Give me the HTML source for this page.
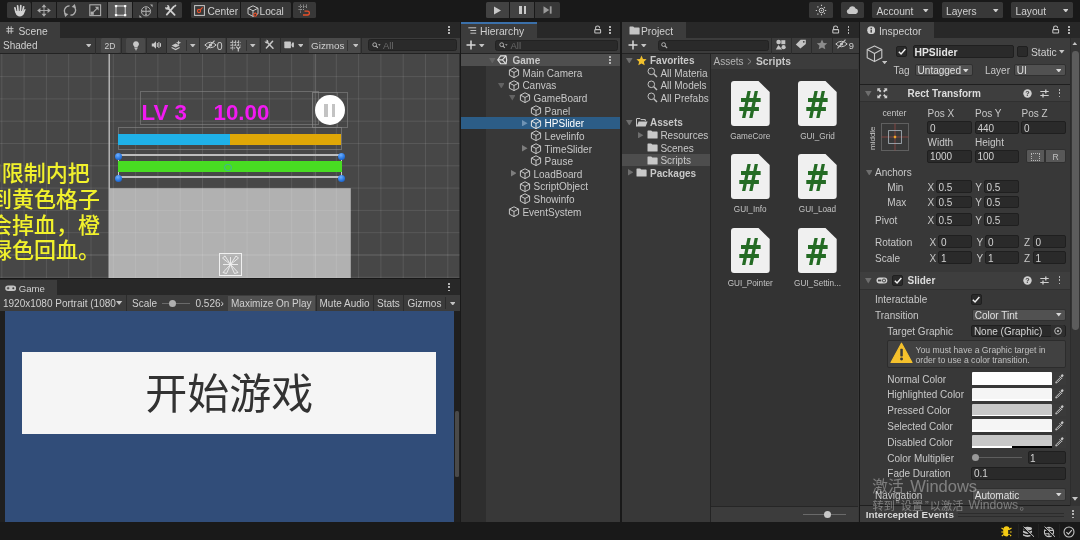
<!DOCTYPE html>
<html><head><meta charset="utf-8"><title>Unity</title>
<style>
html,body{margin:0;padding:0}
body{will-change:transform;width:1080px;height:540px;overflow:hidden;background:#191919;position:relative;font-family:"Liberation Sans","Noto Sans CJK SC",sans-serif;font-size:10px;color:#c8c8c8}
.a{position:absolute;box-sizing:border-box}
.t{white-space:nowrap}
.b{font-weight:bold}
.clip{overflow:hidden}
</style></head><body>
<div class="a" style="left:0px;top:0px;width:1080px;height:22px;background:#191919;"></div>
<div class="a" style="left:7.0px;top:2px;width:24.3px;height:16px;background:#383838;border-radius:1.5px;"></div>
<div class="a" style="left:32.15px;top:2px;width:24.3px;height:16px;background:#383838;"></div>
<div class="a" style="left:57.3px;top:2px;width:24.3px;height:16px;background:#383838;"></div>
<div class="a" style="left:82.44999999999999px;top:2px;width:24.3px;height:16px;background:#383838;"></div>
<div class="a" style="left:107.6px;top:2px;width:24.3px;height:16px;background:#585858;"></div>
<div class="a" style="left:132.75px;top:2px;width:24.3px;height:16px;background:#383838;"></div>
<div class="a" style="left:157.89999999999998px;top:2px;width:24.3px;height:16px;background:#383838;border-radius:1.5px;"></div>
<svg class="a" style="left:12.5px;top:3.6px;" width="13" height="13" viewBox="0 0 13 13"><g fill="#d2d2d2"><rect x="2.1" y="2.8" width="1.7" height="6" rx="0.85" transform="rotate(-14 3 8)"/><rect x="4.3" y="0.9" width="1.7" height="7.2" rx="0.85" transform="rotate(-5 5.1 8)"/><rect x="6.5" y="0.7" width="1.7" height="7.2" rx="0.85" transform="rotate(4 7.3 8)"/><rect x="8.6" y="1.9" width="1.7" height="6.6" rx="0.85" transform="rotate(13 9.4 8)"/><path d="M2.3 7 H10.2 L11.5 5.2 Q12.3 4.5 12.7 5.4 L11.1 9.6 Q10 12.4 6.9 12.4 Q3.5 12.4 2.7 9.6 Z"/></g></svg>
<svg class="a" style="left:37.2px;top:3.7px;" width="14" height="13" viewBox="0 0 14 13"><g fill="#adadad"><path d="M7 0.2 L9.4 3.2 H4.6Z M7 12.8 L9.4 9.8 H4.6Z M0.2 6.5 L3.4 4.1 V8.9Z M13.8 6.5 L10.6 4.1 V8.9Z"/><rect x="6.55" y="2.8" width="0.9" height="7.4"/><rect x="3" y="6.05" width="8" height="0.9"/></g></svg>
<svg class="a" style="left:63.4px;top:3.8px;" width="14" height="13" viewBox="0 0 14 13"><g fill="none" stroke="#adadad" stroke-width="1.3"><path d="M3.2 10.6 A5 5 0 0 1 6.6 1.8"/><path d="M10.8 2.4 A5 5 0 0 1 7.4 11.2"/></g><path d="M1 9 L5.4 10 L2.2 12.9Z M13 4 L8.6 3 L11.8 0.1Z" fill="#adadad"/></svg>
<svg class="a" style="left:88.6px;top:4.2px;" width="13" height="13" viewBox="0 0 13 13"><rect x="0.8" y="0.8" width="10.8" height="10.8" fill="none" stroke="#adadad" stroke-width="1.1"/><rect x="1.6" y="7.6" width="3.2" height="3.2" fill="#adadad"/><path d="M4.6 7.8 L8.6 3.8" stroke="#adadad" stroke-width="1.2"/><path d="M5.8 2.8 H9.6 V6.6Z" fill="#adadad"/></svg>
<svg class="a" style="left:113.7px;top:4px;" width="13" height="13" viewBox="0 0 13 13"><rect x="2" y="2" width="9.2" height="9.2" fill="none" stroke="#e8e8e8" stroke-width="0.9"/><g fill="#fff"><rect x="0.9" y="0.9" width="2.3" height="2.3" rx="0.6"/><rect x="10" y="0.9" width="2.3" height="2.3" rx="0.6"/><rect x="0.9" y="10" width="2.3" height="2.3" rx="0.6"/><rect x="10" y="10" width="2.3" height="2.3" rx="0.6"/></g></svg>
<svg class="a" style="left:138.6px;top:3.6px;" width="14" height="14" viewBox="0 0 14 14"><g fill="none" stroke="#adadad" stroke-width="1"><circle cx="7" cy="7.3" r="4.6"/><path d="M7 4 V10.6 M3.7 7.3 H10.3"/></g><g fill="#adadad"><path d="M7 2.9 L8.2 4.6 H5.8Z M7 11.7 L8.2 10 H5.8Z M2.6 7.3 L4.3 6.1 V8.5Z M11.4 7.3 L9.7 6.1 V8.5Z"/><path d="M0.4 13.6 V11 L3 13.6Z M13.6 0.6 H11 L13.6 3.2Z"/></g></svg>
<svg class="a" style="left:163.5px;top:3.8px;" width="13" height="13" viewBox="0 0 13 13"><g stroke="#d0d0d0" stroke-width="1.8" stroke-linecap="round"><path d="M4 4.2 L10.6 10.9"/><path d="M9.8 2.6 L2.8 10.6"/></g><circle cx="3.3" cy="3.4" r="2.3" fill="#d0d0d0"/><circle cx="2.2" cy="2.2" r="1.25" fill="#383838"/><path d="M11.4 0.5 L12.5 1.6 L10.9 3.2 L9.8 2.1Z" fill="#d0d0d0"/></svg>
<div class="a" style="left:191px;top:2px;width:48.5px;height:16px;background:#383838;border-radius:1.5px 0 0 1.5px;"></div>
<div class="a" style="left:240.5px;top:2px;width:50.5px;height:16px;background:#383838;border-radius:0 1.5px 1.5px 0;"></div>
<div class="a t " style="left:207.5px;top:4.60px;height:14px;line-height:14px;color:#d0d0d0;font-size:10.2px">Center</div>
<div class="a t " style="left:259.5px;top:4.60px;height:14px;line-height:14px;color:#d0d0d0;font-size:10.2px">Local</div>
<svg class="a" style="left:194.3px;top:5.1px;" width="11" height="11" viewBox="0 0 11 11"><rect x="0.6" y="0.6" width="9.8" height="9.8" fill="none" stroke="#c8c8c8" stroke-width="1"/><circle cx="5" cy="6" r="1.6" fill="none" stroke="#e8502a" stroke-width="1.1"/><path d="M6.2 4.8 L8.6 2.4" stroke="#e8502a" stroke-width="1.1"/></svg>
<svg class="a" style="left:246.5px;top:4.5px;" width="13" height="13" viewBox="0 0 13 13"><g fill="none" stroke="#c8c8c8" stroke-width="1"><path d="M6 0.8 L11 3.2 V8.8 L6 11.4 L1 8.8 V3.2Z"/><path d="M1 3.2 L6 5.8 L11 3.2 M6 5.8 V11.4"/></g><circle cx="8.2" cy="9.8" r="1.5" fill="#383838" stroke="#e8502a" stroke-width="1.1"/><path d="M6 9.8 H6.8 M8.2 7.4 V8.2" stroke="#e8502a" stroke-width="1"/></svg>
<div class="a" style="left:293px;top:2px;width:23px;height:16px;background:#383838;border-radius:1.5px;"></div>
<svg class="a" style="left:298px;top:4.3px;" width="13" height="13" viewBox="0 0 13 13"><g stroke="#9a9a9a" stroke-width="0.9" fill="none" stroke-dasharray="1.3 1"><path d="M0.5 2.5 H9 M0.5 5.5 H6 M2.5 0.5 V9 M5.5 0.5 V6 M8.5 0.5 V4"/></g><path d="M6.5 7.2 H9.5 A1.9 1.9 0 0 1 9.5 11 H5" fill="none" stroke="#e8502a" stroke-width="1.3"/></svg>
<div class="a" style="left:485.5px;top:2px;width:23.5px;height:16px;background:#424242;border-radius:1.5px 0 0 1.5px;"></div>
<div class="a" style="left:510px;top:2px;width:24px;height:16px;background:#424242;"></div>
<div class="a" style="left:535px;top:2px;width:24.5px;height:16px;background:#383838;border-radius:0 1.5px 1.5px 0;"></div>
<svg class="a" style="left:493px;top:5.5px;" width="9" height="9" viewBox="0 0 9 9"><path d="M1 0.5 L8 4.5 L1 8.5 Z" fill="#c8c8c8"/></svg>
<div class="a" style="left:519.2px;top:6px;width:2.5px;height:8px;background:#c8c8c8;"></div>
<div class="a" style="left:523.8px;top:6px;width:2.5px;height:8px;background:#c8c8c8;"></div>
<svg class="a" style="left:542.5px;top:6px;" width="10" height="8" viewBox="0 0 10 8"><path d="M0.5 0.3 L6.3 4 L0.5 7.7 Z" fill="#9a9a9a"/><rect x="6.8" y="0.3" width="1.8" height="7.4" fill="#9a9a9a"/></svg>
<div class="a" style="left:809px;top:2px;width:24px;height:16px;background:#383838;border-radius:1.5px;"></div>
<div class="a" style="left:840.5px;top:2px;width:23.5px;height:16px;background:#383838;border-radius:1.5px;"></div>
<svg class="a" style="left:814.5px;top:3.5px;" width="13" height="13" viewBox="0 0 13 13"><circle cx="6.5" cy="6.5" r="2.3" fill="none" stroke="#c8c8c8" stroke-width="1"/><circle cx="6.5" cy="6.5" r="0.8" fill="#c8c8c8"/><g stroke="#c8c8c8" stroke-width="1.1" stroke-dasharray="1.2 1.2"><path d="M6.5 0.8 V3 M6.5 10 V12.2 M0.8 6.5 H3 M10 6.5 H12.2 M2.5 2.5 L4 4 M9 9 L10.5 10.5 M2.5 10.5 L4 9 M9 4 L10.5 2.5"/></g></svg>
<svg class="a" style="left:846px;top:5px;" width="13" height="10" viewBox="0 0 13 10"><path d="M3 9 A2.6 2.6 0 0 1 2.8 3.9 A3.6 3.6 0 0 1 9.6 3.4 A2.9 2.9 0 0 1 10 9 Z" fill="#c8c8c8"/></svg>
<div class="a" style="left:872px;top:2px;width:61px;height:16px;background:#383838;border-radius:1.5px;"></div>
<div class="a t " style="left:876.5px;top:4.60px;height:14px;line-height:14px;color:#d0d0d0;font-size:10.2px">Account</div>
<svg class="a" style="left:923px;top:8.5px;" width="5.5" height="3.6" viewBox="0 0 5.5 3.6"><path d="M0 0 H5.5 L2.75 3.6 Z" fill="#d0d0d0"/></svg>
<div class="a" style="left:941.5px;top:2px;width:61.5px;height:16px;background:#383838;border-radius:1.5px;"></div>
<div class="a t " style="left:946.0px;top:4.60px;height:14px;line-height:14px;color:#d0d0d0;font-size:10.2px">Layers</div>
<svg class="a" style="left:993.0px;top:8.5px;" width="5.5" height="3.6" viewBox="0 0 5.5 3.6"><path d="M0 0 H5.5 L2.75 3.6 Z" fill="#d0d0d0"/></svg>
<div class="a" style="left:1011px;top:2px;width:61.5px;height:16px;background:#383838;border-radius:1.5px;"></div>
<div class="a t " style="left:1015.5px;top:4.60px;height:14px;line-height:14px;color:#d0d0d0;font-size:10.2px">Layout</div>
<svg class="a" style="left:1062.5px;top:8.5px;" width="5.5" height="3.6" viewBox="0 0 5.5 3.6"><path d="M0 0 H5.5 L2.75 3.6 Z" fill="#d0d0d0"/></svg>
<div class="a" style="left:0px;top:22px;width:459.5px;height:15.5px;background:#282828;"></div>
<div class="a" style="left:0px;top:22px;width:60px;height:15.5px;background:#3c3c3c;"></div>
<svg class="a" style="left:6px;top:25.8px;" width="8" height="8" viewBox="0 0 8 8"><g stroke="#c4c4c4" stroke-width="0.95" fill="none"><path d="M0.3 2.6 H7.5 M0.3 5.2 H7.5 M2.4 0.3 V7.7 M5.2 0.3 V7.7"/></g></svg>
<div class="a t " style="left:18.5px;top:25.00px;height:14px;line-height:14px;color:#d0d0d0;font-size:10.3px">Scene</div>
<div class="a" style="left:448.1px;top:25.900000000000002px;width:1.8px;height:1.8px;background:#b4b4b4;"></div>
<div class="a" style="left:448.1px;top:29.1px;width:1.8px;height:1.8px;background:#b4b4b4;"></div>
<div class="a" style="left:448.1px;top:32.300000000000004px;width:1.8px;height:1.8px;background:#b4b4b4;"></div>
<div class="a" style="left:0px;top:37.5px;width:459.5px;height:16px;background:#3c3c3c;"></div>
<div class="a" style="left:0px;top:53.3px;width:459.5px;height:0.9px;background:#232323;"></div>
<div class="a t " style="left:3px;top:39.10px;height:14px;line-height:14px;color:#d0d0d0">Shaded</div>
<svg class="a" style="left:85.5px;top:43.5px;" width="5.5" height="3.6" viewBox="0 0 5.5 3.6"><path d="M0 0 H5.5 L2.75 3.6 Z" fill="#c4c4c4"/></svg>
<div class="a" style="left:95px;top:37.5px;width:0.8px;height:16px;background:#2c2c2c;"></div>
<div class="a" style="left:101px;top:38px;width:18.5px;height:14.5px;background:#4a4a4a;border-radius:1.5px;"></div>
<div class="a t " style="left:104.5px;top:38.70px;height:14px;line-height:14px;color:#d0d0d0;font-size:8.5px">2D</div>
<div class="a" style="left:120.5px;top:37.5px;width:0.8px;height:16px;background:#2c2c2c;"></div>
<div class="a" style="left:126px;top:38px;width:19px;height:14.5px;background:#4a4a4a;border-radius:1.5px;"></div>
<svg class="a" style="left:130.6px;top:39.6px;" width="10" height="12" viewBox="0 0 10 12"><path d="M5 1.3 A2.9 2.9 0 0 1 6.7 6.6 V7.6 H3.3 V6.6 A2.9 2.9 0 0 1 5 1.3Z" fill="#c8c8c8"/><rect x="3.6" y="8.1" width="2.8" height="0.9" fill="#c8c8c8"/><rect x="4" y="9.4" width="2" height="0.8" fill="#c8c8c8"/></svg>
<div class="a" style="left:145.9px;top:37.5px;width:0.8px;height:16px;background:#2c2c2c;"></div>
<svg class="a" style="left:151px;top:39.8px;" width="11" height="10" viewBox="0 0 11 10"><path d="M0.8 3.4 H2.6 L5 1.2 V8.8 L2.6 6.6 H0.8Z" fill="#c8c8c8"/><path d="M6.3 3 V7 M7.9 2 V8 M9.5 3.2 V6.8" stroke="#c8c8c8" stroke-width="1"/></svg>
<div class="a" style="left:166.5px;top:38px;width:32px;height:14.5px;background:#474747;"></div>
<div class="a" style="left:199.3px;top:38px;width:26.2px;height:14.5px;background:#474747;"></div>
<div class="a" style="left:226.3px;top:38px;width:33.2px;height:14.5px;background:#474747;"></div>
<div class="a" style="left:166px;top:37.5px;width:0.8px;height:16px;background:#2c2c2c;"></div>
<svg class="a" style="left:170.5px;top:39.6px;" width="11" height="11" viewBox="0 0 11 11"><path d="M0.6 5.6 L4.6 3.6 L8.6 5.6 L4.6 7.6Z" fill="#c8c8c8"/><path d="M0.6 7.6 L4.6 9.6 L8.6 7.6" fill="none" stroke="#c8c8c8" stroke-width="1.1"/><path d="M7.6 0.2 L8.3 2 L10.2 2.7 L8.3 3.4 L7.6 5.2 L6.9 3.4 L5 2.7 L6.9 2Z" fill="#c8c8c8"/></svg>
<div class="a" style="left:185.8px;top:39.5px;width:0.7px;height:11.5px;background:#333;"></div>
<svg class="a" style="left:190px;top:43.5px;" width="5.5" height="3.6" viewBox="0 0 5.5 3.6"><path d="M0 0 H5.5 L2.75 3.6 Z" fill="#c4c4c4"/></svg>
<div class="a" style="left:198.5px;top:37.5px;width:0.8px;height:16px;background:#2c2c2c;"></div>
<svg class="a" style="left:203.5px;top:39.8px;" width="13" height="10" viewBox="0 0 13 10"><path d="M0.8 5 Q6.5 -0.5 12.2 5 Q6.5 10.5 0.8 5Z" fill="none" stroke="#c8c8c8" stroke-width="1"/><circle cx="6.5" cy="5" r="1.6" fill="#c8c8c8"/><path d="M2.5 9.3 L10.5 0.7" stroke="#c8c8c8" stroke-width="1.1"/></svg>
<div class="a t " style="left:216.8px;top:39.10px;height:14px;line-height:14px;color:#d0d0d0;font-size:10.5px">0</div>
<div class="a" style="left:225.5px;top:37.5px;width:0.8px;height:16px;background:#2c2c2c;"></div>
<svg class="a" style="left:230px;top:39.6px;" width="12" height="12" viewBox="0 0 12 12"><g stroke="#c8c8c8" stroke-width="0.95" fill="none"><path d="M0.3 2.4 H10.6 M0.3 5.2 H10.6 M0.3 8 H5.2" stroke-dasharray="2.4 0.8"/><path d="M2.6 0.4 V10.2 M5.6 0.4 V5.6 M8.6 0.4 V5.6" stroke-dasharray="2.2 0.8"/><path d="M6.2 6.6 L8.3 9 L10.4 6.6 M8.3 9 V11.4" stroke-width="1.15"/></g></svg>
<div class="a" style="left:246px;top:39.5px;width:0.7px;height:11.5px;background:#333;"></div>
<svg class="a" style="left:250px;top:43.5px;" width="5.5" height="3.6" viewBox="0 0 5.5 3.6"><path d="M0 0 H5.5 L2.75 3.6 Z" fill="#c4c4c4"/></svg>
<div class="a" style="left:259.5px;top:37.5px;width:0.8px;height:16px;background:#2c2c2c;"></div>
<svg class="a" style="left:263.5px;top:39.3px;" width="11" height="11" viewBox="0 0 11 11"><g stroke="#c8c8c8" stroke-width="1.5" stroke-linecap="round"><path d="M3 3 L9 9.2"/><path d="M8.6 2.2 L2.4 9"/></g><circle cx="2.6" cy="2.6" r="1.8" fill="#c8c8c8"/><circle cx="1.8" cy="1.8" r="0.9" fill="#3c3c3c"/></svg>
<div class="a" style="left:279.7px;top:37.5px;width:0.8px;height:16px;background:#2c2c2c;"></div>
<svg class="a" style="left:284.3px;top:41px;" width="11" height="8" viewBox="0 0 11 8"><rect x="0.3" y="0.6" width="6.6" height="6.6" rx="0.6" fill="#c8c8c8"/><path d="M7.3 3.9 L8.3 1.6 H9.9 V6.2 H8.3Z" fill="#c8c8c8"/></svg>
<svg class="a" style="left:297.5px;top:43.5px;" width="5.5" height="3.6" viewBox="0 0 5.5 3.6"><path d="M0 0 H5.5 L2.75 3.6 Z" fill="#c4c4c4"/></svg>
<div class="a" style="left:308.7px;top:38px;width:51.8px;height:14.5px;background:#4a4a4a;"></div>
<div class="a t " style="left:311px;top:39.10px;height:14px;line-height:14px;color:#d0d0d0;font-size:9.9px">Gizmos</div>
<div class="a" style="left:346.5px;top:39.5px;width:0.7px;height:11.5px;background:#333;"></div>
<svg class="a" style="left:352.5px;top:43.5px;" width="5.5" height="3.6" viewBox="0 0 5.5 3.6"><path d="M0 0 H5.5 L2.75 3.6 Z" fill="#c4c4c4"/></svg>
<div class="a" style="left:360.5px;top:37.5px;width:0.8px;height:16px;background:#2c2c2c;"></div>
<div class="a" style="left:367.5px;top:39.3px;width:89px;height:11.6px;background:#2a2a2a;border-radius:2.5px;border:0.6px solid #222;"></div>
<svg class="a" style="left:372px;top:42.3px;" width="9" height="7" viewBox="0 0 9 7"><circle cx="2.7" cy="2.7" r="1.9" fill="none" stroke="#b0b0b0" stroke-width="1"/><path d="M4.1 4.1 L5.8 5.9" stroke="#b0b0b0" stroke-width="1.1"/><path d="M6 2.2 H8.6 L7.3 3.8Z" fill="#b0b0b0"/></svg>
<div class="a t " style="left:383px;top:38.50px;height:14px;line-height:14px;color:#6a6a6a;font-size:9.5px">All</div>
<svg class="a" style="left:0px;top:54.2px;" width="459.5" height="224.3" viewBox="0 0 459.5 224.3"><rect x="0" y="0" width="459.5" height="224.3" fill="#474747"/><rect x="109.6" y="134.2" width="241.20000000000002" height="90.10000000000002" fill="#b1b1b1"/><path d="M1.8 0 V224.3 M24.1 0 V224.3 M46.4 0 V224.3 M68.7 0 V224.3 M91.0 0 V224.3 M113.3 0 V224.3 M135.6 0 V224.3 M157.9 0 V224.3 M180.2 0 V224.3 M202.5 0 V224.3 M224.8 0 V224.3 M247.1 0 V224.3 M269.4 0 V224.3 M291.7 0 V224.3 M314.0 0 V224.3 M336.3 0 V224.3 M358.6 0 V224.3 M380.9 0 V224.3 M403.2 0 V224.3 M425.5 0 V224.3 M447.8 0 V224.3 M0 22.6 H459.5 M0 44.9 H459.5 M0 67.2 H459.5 M0 89.5 H459.5 M0 111.8 H459.5 M0 134.1 H459.5 M0 156.4 H459.5 M0 178.7 H459.5 M0 201.0 H459.5 M0 223.3 H459.5" stroke="#ffffff" stroke-opacity="0.11" stroke-width="0.9" fill="none"/><path d="M0 201.0 H459.5" stroke="#ffffff" stroke-opacity="0.12" stroke-width="0.9"/><path d="M315.6 0 V224.3" stroke="#ffffff" stroke-opacity="0.16" stroke-width="1"/><path d="M109.2 0 V224.3" stroke="#c4c4c4" stroke-width="1.3"/></svg>
<div class="a" style="left:140px;top:91px;width:179px;height:34.2px;border:0.8px solid #8a8a8a;opacity:.55;"></div>
<div class="a" style="left:312px;top:91.5px;width:36.2px;height:36.3px;border:0.8px solid #8a8a8a;opacity:.55;"></div>
<div class="a" style="left:312px;top:91.5px;width:25.5px;height:36.3px;border:0.8px solid #8a8a8a;opacity:.4;"></div>
<div class="a t " style="left:141.5px;top:100.40px;height:26px;line-height:26px;color:#f21af2;font-size:22.3px;font-weight:bold;">LV 3</div>
<div class="a t " style="left:213.5px;top:100.40px;height:26px;line-height:26px;color:#f21af2;font-size:22.3px;font-weight:bold;">10.00</div>
<div class="a" style="left:315px;top:95.2px;width:30px;height:30px;background:#ffffff;border-radius:50%;"></div>
<div class="a" style="left:324.3px;top:103.5px;width:3.6px;height:13.4px;background:#c3c3c3;"></div>
<div class="a" style="left:331.6px;top:103.5px;width:3.6px;height:13.4px;background:#c3c3c3;"></div>
<div class="a" style="left:118px;top:127.3px;width:223.7px;height:22.5px;border:0.8px solid #8a8a8a;opacity:.6;"></div>
<div class="a" style="left:118px;top:134.3px;width:111.5px;height:10.4px;background:#1fb1e8;"></div>
<div class="a" style="left:229.5px;top:134.3px;width:111.8px;height:10.4px;background:#dfa707;"></div>
<div class="a" style="left:118px;top:154.4px;width:223.5px;height:1.5px;background:#bdbdbd;"></div>
<div class="a" style="left:118px;top:176.4px;width:223.5px;height:1.5px;background:#bdbdbd;"></div>
<div class="a" style="left:117.5px;top:155px;width:1px;height:22px;background:#c9c9c9;"></div>
<div class="a" style="left:341px;top:155px;width:1px;height:22px;background:#c9c9c9;"></div>
<div class="a" style="left:118px;top:161px;width:223.5px;height:10.9px;background:#48dc22;"></div>
<div class="a" style="left:224.3px;top:163.6px;width:7.8px;height:7.8px;border:1.4px solid #3f9fd0;border-radius:50%;opacity:.7;"></div>
<div class="a" style="left:114.5px;top:152.5px;width:7px;height:7px;background:radial-gradient(circle at 40% 30%, #6fb0ff 0%, #2a78e0 55%, #1550b0 100%);border-radius:50%;"></div>
<div class="a" style="left:114.5px;top:174.5px;width:7px;height:7px;background:radial-gradient(circle at 40% 30%, #6fb0ff 0%, #2a78e0 55%, #1550b0 100%);border-radius:50%;"></div>
<div class="a" style="left:338.0px;top:152.5px;width:7px;height:7px;background:radial-gradient(circle at 40% 30%, #6fb0ff 0%, #2a78e0 55%, #1550b0 100%);border-radius:50%;"></div>
<div class="a" style="left:338.0px;top:174.5px;width:7px;height:7px;background:radial-gradient(circle at 40% 30%, #6fb0ff 0%, #2a78e0 55%, #1550b0 100%);border-radius:50%;"></div>
<div class="a t " style="left:-20.2px;top:157.00px;height:28px;line-height:28px;color:#f1f12c;font-size:22px;font-weight:500;font-family:'Noto Sans CJK SC',sans-serif;">间限制内把</div>
<div class="a t " style="left:-10px;top:182.70px;height:28px;line-height:28px;color:#f1f12c;font-size:22px;font-weight:500;font-family:'Noto Sans CJK SC',sans-serif;">到黄色格子</div>
<div class="a t " style="left:-10px;top:208.60px;height:28px;line-height:28px;color:#f1f12c;font-size:22px;font-weight:500;font-family:'Noto Sans CJK SC',sans-serif;">会掉血，橙</div>
<div class="a t " style="left:-10px;top:233.60px;height:28px;line-height:28px;color:#f1f12c;font-size:22px;font-weight:500;font-family:'Noto Sans CJK SC',sans-serif;">绿色回血。</div>
<div class="a" style="left:218.5px;top:253px;width:23px;height:23px;border:1px solid #f0f0f0;"></div>
<svg class="a" style="left:219.5px;top:254px;" width="21" height="21" viewBox="0 0 21 21"><g fill="none" stroke="#f0f0f0" stroke-width="0.9"><path d="M10.5 10.5 L2.5 4 L5 2Z M10.5 10.5 L18.5 4 L16 2Z M10.5 10.5 L3 18.5 L6.5 19.5Z M10.5 10.5 L18 18.5 L14.5 19.5Z M10.5 10.5 V3 M10.5 10.5 H3 M10.5 10.5 H18"/></g></svg>
<div class="a" style="left:0px;top:278.5px;width:459.5px;height:16.7px;background:#282828;"></div>
<div class="a" style="left:0px;top:279.7px;width:57px;height:15.5px;background:#3c3c3c;"></div>
<svg class="a" style="left:4.6px;top:285.3px;" width="11.5" height="6.4" viewBox="0 0 11.5 6.4"><path d="M3 0.4 H8.4 A2.8 2.8 0 0 1 8.4 6 H3 A2.8 2.8 0 0 1 3 0.4Z" fill="#c4c4c4"/><path d="M3.1 1.9 V4.5 M1.8 3.2 H4.4" stroke="#3c3c3c" stroke-width="0.9"/><circle cx="8.3" cy="3.2" r="1" fill="#3c3c3c"/></svg>
<div class="a t " style="left:18.7px;top:281.90px;height:14px;line-height:14px;color:#d0d0d0;font-size:9.6px">Game</div>
<div class="a" style="left:448.1px;top:283.20000000000005px;width:1.8px;height:1.8px;background:#b4b4b4;"></div>
<div class="a" style="left:448.1px;top:286.40000000000003px;width:1.8px;height:1.8px;background:#b4b4b4;"></div>
<div class="a" style="left:448.1px;top:289.6px;width:1.8px;height:1.8px;background:#b4b4b4;"></div>
<div class="a" style="left:0px;top:295.2px;width:459.5px;height:15.8px;background:#3c3c3c;"></div>
<div class="a t " style="left:3px;top:297.00px;height:14px;line-height:14px;color:#d0d0d0">1920x1080 Portrait (1080</div>
<svg class="a" style="left:116.3px;top:301.35px;" width="6.3" height="3.9" viewBox="0 0 6.3 3.9"><path d="M0 0 H6.3 L3.15 3.9 Z" fill="#c4c4c4"/></svg>
<div class="a" style="left:125.5px;top:295px;width:0.8px;height:16px;background:#2c2c2c;"></div>
<div class="a t " style="left:132px;top:297.00px;height:14px;line-height:14px;color:#d0d0d0">Scale</div>
<div class="a" style="left:162px;top:302.8px;width:28px;height:0.9px;background:#6a6a6a;"></div>
<div class="a" style="left:169.3px;top:299.6px;width:7px;height:7px;background:#b0b0b0;border-radius:50%;"></div>
<div class="a t " style="left:195.5px;top:297.00px;height:14px;line-height:14px;color:#d0d0d0">0.526›</div>
<div class="a" style="left:228.3px;top:295.5px;width:86.3px;height:15.2px;background:#505050;"></div>
<div class="a t " style="left:231px;top:297.00px;height:14px;line-height:14px;color:#d0d0d0">Maximize On Play</div>
<div class="a" style="left:315.5px;top:295px;width:0.8px;height:16px;background:#2c2c2c;"></div>
<div class="a t " style="left:319.5px;top:297.00px;height:14px;line-height:14px;color:#d0d0d0">Mute Audio</div>
<div class="a" style="left:373px;top:295px;width:0.8px;height:16px;background:#2c2c2c;"></div>
<div class="a t " style="left:377px;top:297.00px;height:14px;line-height:14px;color:#d0d0d0">Stats</div>
<div class="a" style="left:402.5px;top:295px;width:0.8px;height:16px;background:#2c2c2c;"></div>
<div class="a t " style="left:407.5px;top:297.00px;height:14px;line-height:14px;color:#d0d0d0">Gizmos</div>
<div class="a" style="left:444.5px;top:297px;width:0.7px;height:12px;background:#2c2c2c;"></div>
<svg class="a" style="left:449.5px;top:301.5px;" width="5.5" height="3.6" viewBox="0 0 5.5 3.6"><path d="M0 0 H5.5 L2.75 3.6 Z" fill="#c4c4c4"/></svg>
<div class="a" style="left:0px;top:311px;width:459.5px;height:211px;background:#1f1f1f;"></div>
<div class="a" style="left:4.7px;top:311px;width:449.6px;height:210.8px;background:#314d79;"></div>
<div class="a" style="left:22px;top:352px;width:414px;height:81.7px;background:#f5f5f5;"></div>
<div class="a t " style="left:145.3px;top:365.60px;height:50px;line-height:50px;color:#323232;font-size:42px;font-family:'Noto Sans CJK SC',sans-serif;">开始游戏</div>
<div class="a" style="left:455px;top:411px;width:3.5px;height:66px;background:#4a4a4a;border-radius:1.5px;"></div>
<div class="a" style="left:461px;top:22px;width:159px;height:500px;background:#383838;"></div>
<div class="a" style="left:461px;top:22px;width:159px;height:15.5px;background:#282828;"></div>
<div class="a" style="left:461px;top:22px;width:76px;height:15.5px;background:#3c3c3c;"></div>
<div class="a" style="left:461px;top:22px;width:76px;height:1.7px;background:#3b70aa;"></div>
<svg class="a" style="left:467.5px;top:26.8px;" width="9" height="8" viewBox="0 0 9 8"><g stroke="#c4c4c4" stroke-width="1"><path d="M0.3 0.8 H8.2 M2.4 3.5 H8.2 M2.4 6.2 H8.2"/></g></svg>
<div class="a t " style="left:480px;top:25.00px;height:14px;line-height:14px;color:#d0d0d0;font-size:10.3px">Hierarchy</div>
<svg class="a" style="left:593.5px;top:24.8px;" width="8" height="9" viewBox="0 0 8 9"><path d="M1.6 4.3 V2.9 A2 2 0 0 1 5.6 2.9 V3.3" fill="none" stroke="#c4c4c4" stroke-width="1.05"/><rect x="0.8" y="4.6" width="5.8" height="3.4" rx="0.6" fill="none" stroke="#c4c4c4" stroke-width="1.05"/></svg>
<div class="a" style="left:609.1px;top:25.900000000000002px;width:1.8px;height:1.8px;background:#b4b4b4;"></div>
<div class="a" style="left:609.1px;top:29.1px;width:1.8px;height:1.8px;background:#b4b4b4;"></div>
<div class="a" style="left:609.1px;top:32.300000000000004px;width:1.8px;height:1.8px;background:#b4b4b4;"></div>
<div class="a" style="left:461px;top:37.5px;width:159px;height:16px;background:#3c3c3c;"></div>
<div class="a" style="left:461px;top:53.3px;width:159px;height:0.9px;background:#232323;"></div>
<svg class="a" style="left:465.5px;top:39.8px;" width="10" height="10" viewBox="0 0 10 10"><path d="M5 0.5 V9.5 M0.5 5 H9.5" stroke="#d8d8d8" stroke-width="1.5"/></svg>
<svg class="a" style="left:479px;top:43.7px;" width="5.5" height="3.6" viewBox="0 0 5.5 3.6"><path d="M0 0 H5.5 L2.75 3.6 Z" fill="#c4c4c4"/></svg>
<div class="a" style="left:495px;top:39.5px;width:123px;height:11.3px;background:#2a2a2a;border-radius:2.5px;border:0.6px solid #222;"></div>
<svg class="a" style="left:499px;top:42.3px;" width="9" height="7" viewBox="0 0 9 7"><circle cx="2.7" cy="2.7" r="1.9" fill="none" stroke="#b0b0b0" stroke-width="1"/><path d="M4.1 4.1 L5.8 5.9" stroke="#b0b0b0" stroke-width="1.1"/><path d="M6 2.2 H8.6 L7.3 3.8Z" fill="#b0b0b0"/></svg>
<div class="a t " style="left:510.5px;top:38.50px;height:14px;line-height:14px;color:#6a6a6a;font-size:9.5px">All</div>
<div class="a" style="left:461px;top:54.2px;width:25px;height:468px;background:#2e2e2e;"></div>
<div class="a" style="left:461px;top:53.7px;width:159px;height:11.83px;background:#4f4f4f;"></div>
<div class="a" style="left:609.1px;top:55.915px;width:1.8px;height:1.8px;background:#b4b4b4;"></div>
<div class="a" style="left:609.1px;top:59.115px;width:1.8px;height:1.8px;background:#b4b4b4;"></div>
<div class="a" style="left:609.1px;top:62.315000000000005px;width:1.8px;height:1.8px;background:#b4b4b4;"></div>
<svg class="a" style="left:497.3px;top:55.015px;" width="11" height="10" viewBox="0 0 11 10"><g fill="none" stroke="#e0e0e0" stroke-width="1.15" stroke-linejoin="round"><path d="M0.8 4.8 L3.6 0.9 L9 0.8 L9.7 4.8 L9 8.8 L3.6 8.7Z"/><path d="M0.8 4.8 H5.4 M5.4 4.8 L9 0.8 M5.4 4.8 L9 8.8"/></g></svg>
<svg class="a" style="left:489.2px;top:57.515px;" width="6.6" height="5.6" viewBox="0 0 6.6 5.6"><path d="M0 0 H6.6 L3.3 5.6 Z" fill="#636363"/></svg>
<div class="a t " style="left:512.5px;top:54.12px;height:14px;line-height:14px;color:#c8c8c8;font-weight:bold;">Game</div>
<svg class="a" style="left:508.1px;top:67.045px;" width="12" height="11.4" viewBox="0 0 12 11.4"><g fill="none" stroke="#c8c8c8" stroke-width="1" stroke-linejoin="round"><path d="M6 0.8 L10.6 3.1 V8.2 L6 10.6 L1.4 8.2 V3.1Z"/><path d="M1.4 3.1 L6 5.5 L10.6 3.1 M6 5.5 V10.6"/></g></svg>
<div class="a t " style="left:522.4px;top:66.74px;height:14px;line-height:14px;color:#c8c8c8;">Main Camera</div>
<svg class="a" style="left:508.1px;top:79.67500000000001px;" width="12" height="11.4" viewBox="0 0 12 11.4"><g fill="none" stroke="#c8c8c8" stroke-width="1" stroke-linejoin="round"><path d="M6 0.8 L10.6 3.1 V8.2 L6 10.6 L1.4 8.2 V3.1Z"/><path d="M1.4 3.1 L6 5.5 L10.6 3.1 M6 5.5 V10.6"/></g></svg>
<svg class="a" style="left:497.8px;top:82.775px;" width="6.6" height="5.6" viewBox="0 0 6.6 5.6"><path d="M0 0 H6.6 L3.3 5.6 Z" fill="#636363"/></svg>
<div class="a t " style="left:522.4px;top:79.38px;height:14px;line-height:14px;color:#c8c8c8;">Canvas</div>
<svg class="a" style="left:519.2px;top:92.305px;" width="12" height="11.4" viewBox="0 0 12 11.4"><g fill="none" stroke="#c8c8c8" stroke-width="1" stroke-linejoin="round"><path d="M6 0.8 L10.6 3.1 V8.2 L6 10.6 L1.4 8.2 V3.1Z"/><path d="M1.4 3.1 L6 5.5 L10.6 3.1 M6 5.5 V10.6"/></g></svg>
<svg class="a" style="left:508.90000000000003px;top:95.405px;" width="6.6" height="5.6" viewBox="0 0 6.6 5.6"><path d="M0 0 H6.6 L3.3 5.6 Z" fill="#636363"/></svg>
<div class="a t " style="left:533.5px;top:92.00px;height:14px;line-height:14px;color:#c8c8c8;">GameBoard</div>
<svg class="a" style="left:530.3px;top:104.935px;" width="12" height="11.4" viewBox="0 0 12 11.4"><g fill="none" stroke="#c8c8c8" stroke-width="1" stroke-linejoin="round"><path d="M6 0.8 L10.6 3.1 V8.2 L6 10.6 L1.4 8.2 V3.1Z"/><path d="M1.4 3.1 L6 5.5 L10.6 3.1 M6 5.5 V10.6"/></g></svg>
<div class="a t " style="left:544.5999999999999px;top:104.63px;height:14px;line-height:14px;color:#c8c8c8;">Panel</div>
<div class="a" style="left:461px;top:116.85000000000001px;width:159px;height:12.63px;background:#2c5d87;"></div>
<svg class="a" style="left:530.3px;top:117.56500000000001px;" width="12" height="11.4" viewBox="0 0 12 11.4"><g fill="none" stroke="#e6e6e6" stroke-width="1" stroke-linejoin="round"><path d="M6 0.8 L10.6 3.1 V8.2 L6 10.6 L1.4 8.2 V3.1Z"/><path d="M1.4 3.1 L6 5.5 L10.6 3.1 M6 5.5 V10.6"/></g></svg>
<svg class="a" style="left:522.0px;top:119.965px;" width="5.6" height="6.4" viewBox="0 0 5.6 6.4"><path d="M0 0 L5.6 3.2 L0 6.4 Z" fill="#6f93b4"/></svg>
<div class="a t " style="left:544.5999999999999px;top:117.27px;height:14px;line-height:14px;color:#ffffff;">HPSlider</div>
<svg class="a" style="left:530.3px;top:130.19500000000002px;" width="12" height="11.4" viewBox="0 0 12 11.4"><g fill="none" stroke="#c8c8c8" stroke-width="1" stroke-linejoin="round"><path d="M6 0.8 L10.6 3.1 V8.2 L6 10.6 L1.4 8.2 V3.1Z"/><path d="M1.4 3.1 L6 5.5 L10.6 3.1 M6 5.5 V10.6"/></g></svg>
<div class="a t " style="left:544.5999999999999px;top:129.90px;height:14px;line-height:14px;color:#c8c8c8;">Levelinfo</div>
<svg class="a" style="left:530.3px;top:142.82500000000002px;" width="12" height="11.4" viewBox="0 0 12 11.4"><g fill="none" stroke="#c8c8c8" stroke-width="1" stroke-linejoin="round"><path d="M6 0.8 L10.6 3.1 V8.2 L6 10.6 L1.4 8.2 V3.1Z"/><path d="M1.4 3.1 L6 5.5 L10.6 3.1 M6 5.5 V10.6"/></g></svg>
<svg class="a" style="left:522.0px;top:145.22500000000002px;" width="5.6" height="6.4" viewBox="0 0 5.6 6.4"><path d="M0 0 L5.6 3.2 L0 6.4 Z" fill="#7d7d7d"/></svg>
<div class="a t " style="left:544.5999999999999px;top:142.53px;height:14px;line-height:14px;color:#c8c8c8;">TimeSlider</div>
<svg class="a" style="left:530.3px;top:155.455px;" width="12" height="11.4" viewBox="0 0 12 11.4"><g fill="none" stroke="#c8c8c8" stroke-width="1" stroke-linejoin="round"><path d="M6 0.8 L10.6 3.1 V8.2 L6 10.6 L1.4 8.2 V3.1Z"/><path d="M1.4 3.1 L6 5.5 L10.6 3.1 M6 5.5 V10.6"/></g></svg>
<div class="a t " style="left:544.5999999999999px;top:155.16px;height:14px;line-height:14px;color:#c8c8c8;">Pause</div>
<svg class="a" style="left:519.2px;top:168.085px;" width="12" height="11.4" viewBox="0 0 12 11.4"><g fill="none" stroke="#c8c8c8" stroke-width="1" stroke-linejoin="round"><path d="M6 0.8 L10.6 3.1 V8.2 L6 10.6 L1.4 8.2 V3.1Z"/><path d="M1.4 3.1 L6 5.5 L10.6 3.1 M6 5.5 V10.6"/></g></svg>
<svg class="a" style="left:510.90000000000003px;top:170.485px;" width="5.6" height="6.4" viewBox="0 0 5.6 6.4"><path d="M0 0 L5.6 3.2 L0 6.4 Z" fill="#7d7d7d"/></svg>
<div class="a t " style="left:533.5px;top:167.78px;height:14px;line-height:14px;color:#c8c8c8;">LoadBoard</div>
<svg class="a" style="left:519.2px;top:180.715px;" width="12" height="11.4" viewBox="0 0 12 11.4"><g fill="none" stroke="#c8c8c8" stroke-width="1" stroke-linejoin="round"><path d="M6 0.8 L10.6 3.1 V8.2 L6 10.6 L1.4 8.2 V3.1Z"/><path d="M1.4 3.1 L6 5.5 L10.6 3.1 M6 5.5 V10.6"/></g></svg>
<div class="a t " style="left:533.5px;top:180.41px;height:14px;line-height:14px;color:#c8c8c8;">ScriptObject</div>
<svg class="a" style="left:519.2px;top:193.345px;" width="12" height="11.4" viewBox="0 0 12 11.4"><g fill="none" stroke="#c8c8c8" stroke-width="1" stroke-linejoin="round"><path d="M6 0.8 L10.6 3.1 V8.2 L6 10.6 L1.4 8.2 V3.1Z"/><path d="M1.4 3.1 L6 5.5 L10.6 3.1 M6 5.5 V10.6"/></g></svg>
<div class="a t " style="left:533.5px;top:193.04px;height:14px;line-height:14px;color:#c8c8c8;">Showinfo</div>
<svg class="a" style="left:508.1px;top:205.975px;" width="12" height="11.4" viewBox="0 0 12 11.4"><g fill="none" stroke="#c8c8c8" stroke-width="1" stroke-linejoin="round"><path d="M6 0.8 L10.6 3.1 V8.2 L6 10.6 L1.4 8.2 V3.1Z"/><path d="M1.4 3.1 L6 5.5 L10.6 3.1 M6 5.5 V10.6"/></g></svg>
<div class="a t " style="left:522.4px;top:205.67px;height:14px;line-height:14px;color:#c8c8c8;">EventSystem</div>
<div class="a" style="left:622px;top:22px;width:236.5px;height:500px;background:#383838;"></div>
<div class="a" style="left:622px;top:22px;width:236.5px;height:15.5px;background:#282828;"></div>
<div class="a" style="left:622px;top:22px;width:64px;height:15.5px;background:#3c3c3c;"></div>
<svg class="a" style="left:628.5px;top:25.7px;" width="12" height="9" viewBox="0 0 12 9"><path d="M0.5 1 Q0.5 0.4 1.1 0.4 H4.2 L5.3 1.6 H10 Q10.6 1.6 10.6 2.2 V8 Q10.6 8.6 10 8.6 H1.1 Q0.5 8.6 0.5 8Z" fill="#c4c4c4"/></svg>
<div class="a t " style="left:641px;top:25.00px;height:14px;line-height:14px;color:#d0d0d0;font-size:10.3px">Project</div>
<svg class="a" style="left:832px;top:24.8px;" width="8" height="9" viewBox="0 0 8 9"><path d="M1.6 4.3 V2.9 A2 2 0 0 1 5.6 2.9 V3.3" fill="none" stroke="#c4c4c4" stroke-width="1.05"/><rect x="0.8" y="4.6" width="5.8" height="3.4" rx="0.6" fill="none" stroke="#c4c4c4" stroke-width="1.05"/></svg>
<div class="a" style="left:847.6px;top:25.900000000000002px;width:1.8px;height:1.8px;background:#b4b4b4;"></div>
<div class="a" style="left:847.6px;top:29.1px;width:1.8px;height:1.8px;background:#b4b4b4;"></div>
<div class="a" style="left:847.6px;top:32.300000000000004px;width:1.8px;height:1.8px;background:#b4b4b4;"></div>
<div class="a" style="left:622px;top:37.5px;width:236.5px;height:16px;background:#3c3c3c;"></div>
<div class="a" style="left:622px;top:53.3px;width:236.5px;height:0.9px;background:#232323;"></div>
<svg class="a" style="left:627.5px;top:39.8px;" width="10" height="10" viewBox="0 0 10 10"><path d="M5 0.5 V9.5 M0.5 5 H9.5" stroke="#d8d8d8" stroke-width="1.5"/></svg>
<svg class="a" style="left:641px;top:43.7px;" width="5.5" height="3.6" viewBox="0 0 5.5 3.6"><path d="M0 0 H5.5 L2.75 3.6 Z" fill="#c4c4c4"/></svg>
<div class="a" style="left:658px;top:39.5px;width:110.5px;height:11.3px;background:#2a2a2a;border-radius:2.5px;border:0.6px solid #222;"></div>
<svg class="a" style="left:661px;top:42px;" width="7" height="7" viewBox="0 0 7 7"><circle cx="2.6" cy="2.6" r="1.9" fill="none" stroke="#b0b0b0" stroke-width="1"/><path d="M4 4 L6.2 6.2" stroke="#b0b0b0" stroke-width="1.1"/></svg>
<div class="a" style="left:770.5px;top:37.5px;width:0.8px;height:16px;background:#2c2c2c;"></div>
<div class="a" style="left:790.5px;top:37.5px;width:0.8px;height:16px;background:#2c2c2c;"></div>
<div class="a" style="left:810.5px;top:37.5px;width:0.8px;height:16px;background:#2c2c2c;"></div>
<div class="a" style="left:831.5px;top:37.5px;width:0.8px;height:16px;background:#2c2c2c;"></div>
<svg class="a" style="left:774.5px;top:38.9px;" width="12" height="11" viewBox="0 0 12 11"><circle cx="3.6" cy="3" r="2.3" fill="#c4c4c4"/><rect x="6.3" y="1.2" width="4" height="4" fill="#c4c4c4"/><path d="M2.8 6 L6.6 10.4 H0.2Z" fill="#c4c4c4" transform="translate(0.6,0)"/><circle cx="8.6" cy="8.2" r="2.1" fill="#c4c4c4"/></svg>
<svg class="a" style="left:794.5px;top:39.4px;" width="12" height="10" viewBox="0 0 12 10"><path d="M0.8 5.6 L5.6 0.8 H10.8 V5 L5.4 9.6Z" fill="#c4c4c4"/><circle cx="8.8" cy="2.8" r="0.9" fill="#3c3c3c"/></svg>
<svg class="a" style="left:815.5px;top:38.9px;" width="12" height="11" viewBox="0 0 12 11"><path d="M6 0.6 L7.6 3.9 L11.2 4.3 L8.5 6.7 L9.3 10.2 L6 8.4 L2.7 10.2 L3.5 6.7 L0.8 4.3 L4.4 3.9Z" fill="#8c8c8c"/></svg>
<svg class="a" style="left:835px;top:39.4px;" width="13" height="10" viewBox="0 0 13 10"><path d="M0.8 5 Q6.5 -0.5 12.2 5 Q6.5 10.5 0.8 5Z" fill="none" stroke="#c4c4c4" stroke-width="1"/><circle cx="6.5" cy="5" r="1.6" fill="#c4c4c4"/><path d="M2.5 9.3 L10.5 0.7" stroke="#c4c4c4" stroke-width="1.1"/></svg>
<div class="a t " style="left:848.8px;top:39.10px;height:14px;line-height:14px;color:#d0d0d0;font-size:9.3px">9</div>
<div class="a" style="left:622px;top:54.2px;width:87.8px;height:468px;background:#383838;"></div>
<div class="a" style="left:709.8px;top:54.2px;width:0.9px;height:468px;background:#242424;"></div>
<div class="a clip" style="left:622px;top:54.2px;width:87.8px;height:200px">
<svg class="a" style="left:14px;top:0.3150000000000004px;" width="11" height="11" viewBox="0 0 11 11"><path d="M5.5 0.6 L7 3.9 L10.6 4.3 L7.9 6.7 L8.7 10.2 L5.5 8.4 L2.3 10.2 L3.1 6.7 L0.4 4.3 L4 3.9Z" fill="#f2c12e"/></svg>
<svg class="a" style="left:4px;top:3.3150000000000004px;" width="6.6" height="5.6" viewBox="0 0 6.6 5.6"><path d="M0 0 H6.6 L3.3 5.6 Z" fill="#6e6e6e"/></svg>
<div class="a t " style="left:28.0px;top:-0.08px;height:14px;line-height:14px;color:#c8c8c8;font-weight:bold;">Favorites</div>
<svg class="a" style="left:24.7px;top:12.944999999999997px;" width="11" height="11" viewBox="0 0 11 11"><circle cx="4.3" cy="4.3" r="3.3" fill="none" stroke="#c2c2c2" stroke-width="1"/><path d="M6.8 6.8 L10 10" stroke="#c2c2c2" stroke-width="1.4"/></svg>
<div class="a t " style="left:38.4px;top:12.54px;height:14px;line-height:14px;color:#c8c8c8;">All Materia</div>
<svg class="a" style="left:24.7px;top:25.575000000000006px;" width="11" height="11" viewBox="0 0 11 11"><circle cx="4.3" cy="4.3" r="3.3" fill="none" stroke="#c2c2c2" stroke-width="1"/><path d="M6.8 6.8 L10 10" stroke="#c2c2c2" stroke-width="1.4"/></svg>
<div class="a t " style="left:38.4px;top:25.18px;height:14px;line-height:14px;color:#c8c8c8;">All Models</div>
<svg class="a" style="left:24.7px;top:38.205px;" width="11" height="11" viewBox="0 0 11 11"><circle cx="4.3" cy="4.3" r="3.3" fill="none" stroke="#c2c2c2" stroke-width="1"/><path d="M6.8 6.8 L10 10" stroke="#c2c2c2" stroke-width="1.4"/></svg>
<div class="a t " style="left:38.4px;top:37.80px;height:14px;line-height:14px;color:#c8c8c8;">All Prefabs</div>
<svg class="a" style="left:14px;top:63.465px;" width="12" height="9" viewBox="0 0 12 9"><path d="M0.5 8.5 V1 Q0.5 0.5 1 0.5 H4 L5 1.6 H9.3 V3" fill="none" stroke="#c8c8c8" stroke-width="1"/><path d="M0.6 8.6 L2.6 3.4 H11.6 L9.6 8.6Z" fill="#c8c8c8"/></svg>
<svg class="a" style="left:4px;top:65.465px;" width="6.6" height="5.6" viewBox="0 0 6.6 5.6"><path d="M0 0 H6.6 L3.3 5.6 Z" fill="#6e6e6e"/></svg>
<div class="a t " style="left:28.0px;top:62.07px;height:14px;line-height:14px;color:#c8c8c8;font-weight:bold;">Assets</div>
<svg class="a" style="left:24.7px;top:76.09500000000001px;" width="12" height="9" viewBox="0 0 12 9"><path d="M0.5 1 Q0.5 0.4 1.1 0.4 H4.2 L5.3 1.6 H10 Q10.6 1.6 10.6 2.2 V8 Q10.6 8.6 10 8.6 H1.1 Q0.5 8.6 0.5 8Z" fill="#c8c8c8"/></svg>
<svg class="a" style="left:16.2px;top:77.39500000000001px;" width="5.4" height="6.4" viewBox="0 0 5.4 6.4"><path d="M0 0 L5.4 3.2 L0 6.4 Z" fill="#6e6e6e"/></svg>
<div class="a t " style="left:38.4px;top:74.70px;height:14px;line-height:14px;color:#c8c8c8;">Resources</div>
<svg class="a" style="left:24.7px;top:88.72500000000001px;" width="12" height="9" viewBox="0 0 12 9"><path d="M0.5 1 Q0.5 0.4 1.1 0.4 H4.2 L5.3 1.6 H10 Q10.6 1.6 10.6 2.2 V8 Q10.6 8.6 10 8.6 H1.1 Q0.5 8.6 0.5 8Z" fill="#c8c8c8"/></svg>
<div class="a t " style="left:38.4px;top:87.33px;height:14px;line-height:14px;color:#c8c8c8;">Scenes</div>
<div class="a" style="left:0px;top:99.54px;width:87.8px;height:12.63px;background:#4d4d4d;"></div>
<svg class="a" style="left:24.7px;top:101.355px;" width="12" height="9" viewBox="0 0 12 9"><path d="M0.5 1 Q0.5 0.4 1.1 0.4 H4.2 L5.3 1.6 H10 Q10.6 1.6 10.6 2.2 V8 Q10.6 8.6 10 8.6 H1.1 Q0.5 8.6 0.5 8Z" fill="#c8c8c8"/></svg>
<div class="a t " style="left:38.4px;top:99.95px;height:14px;line-height:14px;color:#c8c8c8;">Scripts</div>
<svg class="a" style="left:14px;top:113.985px;" width="12" height="9" viewBox="0 0 12 9"><path d="M0.5 1 Q0.5 0.4 1.1 0.4 H4.2 L5.3 1.6 H10 Q10.6 1.6 10.6 2.2 V8 Q10.6 8.6 10 8.6 H1.1 Q0.5 8.6 0.5 8Z" fill="#c8c8c8"/></svg>
<svg class="a" style="left:5.5px;top:115.285px;" width="5.4" height="6.4" viewBox="0 0 5.4 6.4"><path d="M0 0 L5.4 3.2 L0 6.4 Z" fill="#6e6e6e"/></svg>
<div class="a t " style="left:28.0px;top:112.58px;height:14px;line-height:14px;color:#c8c8c8;font-weight:bold;">Packages</div>
</div>
<div class="a" style="left:710.7px;top:54.2px;width:147.8px;height:468px;background:#333333;"></div>
<div class="a" style="left:710.7px;top:54.2px;width:147.8px;height:14.6px;background:#3c3c3c;"></div>
<div class="a t " style="left:713.5px;top:55.40px;height:14px;line-height:14px;color:#b4b4b4;font-size:10px">Assets</div>
<svg class="a" style="left:746.5px;top:58.3px;" width="5" height="7" viewBox="0 0 5 7"><path d="M0.8 0.6 L4 3.5 L0.8 6.4" fill="none" stroke="#8a8a8a" stroke-width="1"/></svg>
<div class="a t " style="left:756px;top:55.40px;height:14px;line-height:14px;color:#c8c8c8;font-weight:bold;font-size:10.3px">Scripts</div>
<svg class="a" style="left:731.0px;top:80.9px;" width="38.7" height="45" viewBox="0 0 38.7 45"><path d="M3 0 H27.5 L38.7 11 V42 Q38.7 45 35.7 45 H3 Q0 45 0 42 V3 Q0 0 3 0Z" fill="#f0f0f0"/><text transform="translate(19,37.3) scale(0.98,1.18)" x="0" y="0" text-anchor="middle" font-family="DejaVu Sans, sans-serif" font-weight="bold" font-size="31" fill="#246b24">#</text></svg>
<div class="a t" style="left:710.2px;width:80px;text-align:center;top:130.9px;height:12px;line-height:12px;font-size:8.2px;color:#c4c4c4">GameCore</div>
<svg class="a" style="left:798.3px;top:80.9px;" width="38.7" height="45" viewBox="0 0 38.7 45"><path d="M3 0 H27.5 L38.7 11 V42 Q38.7 45 35.7 45 H3 Q0 45 0 42 V3 Q0 0 3 0Z" fill="#f0f0f0"/><text transform="translate(19,37.3) scale(0.98,1.18)" x="0" y="0" text-anchor="middle" font-family="DejaVu Sans, sans-serif" font-weight="bold" font-size="31" fill="#246b24">#</text></svg>
<div class="a t" style="left:777.5px;width:80px;text-align:center;top:130.9px;height:12px;line-height:12px;font-size:8.2px;color:#c4c4c4">GUI_Grid</div>
<svg class="a" style="left:731.0px;top:154.3px;" width="38.7" height="45" viewBox="0 0 38.7 45"><path d="M3 0 H27.5 L38.7 11 V42 Q38.7 45 35.7 45 H3 Q0 45 0 42 V3 Q0 0 3 0Z" fill="#f0f0f0"/><text transform="translate(19,37.3) scale(0.98,1.18)" x="0" y="0" text-anchor="middle" font-family="DejaVu Sans, sans-serif" font-weight="bold" font-size="31" fill="#246b24">#</text></svg>
<div class="a t" style="left:710.2px;width:80px;text-align:center;top:204.3px;height:12px;line-height:12px;font-size:8.2px;color:#c4c4c4">GUI_Info</div>
<svg class="a" style="left:798.3px;top:154.3px;" width="38.7" height="45" viewBox="0 0 38.7 45"><path d="M3 0 H27.5 L38.7 11 V42 Q38.7 45 35.7 45 H3 Q0 45 0 42 V3 Q0 0 3 0Z" fill="#f0f0f0"/><text transform="translate(19,37.3) scale(0.98,1.18)" x="0" y="0" text-anchor="middle" font-family="DejaVu Sans, sans-serif" font-weight="bold" font-size="31" fill="#246b24">#</text></svg>
<div class="a t" style="left:777.5px;width:80px;text-align:center;top:204.3px;height:12px;line-height:12px;font-size:8.2px;color:#c4c4c4">GUI_Load</div>
<svg class="a" style="left:731.0px;top:227.70000000000002px;" width="38.7" height="45" viewBox="0 0 38.7 45"><path d="M3 0 H27.5 L38.7 11 V42 Q38.7 45 35.7 45 H3 Q0 45 0 42 V3 Q0 0 3 0Z" fill="#f0f0f0"/><text transform="translate(19,37.3) scale(0.98,1.18)" x="0" y="0" text-anchor="middle" font-family="DejaVu Sans, sans-serif" font-weight="bold" font-size="31" fill="#246b24">#</text></svg>
<div class="a t" style="left:710.2px;width:80px;text-align:center;top:277.70000000000005px;height:12px;line-height:12px;font-size:8.2px;color:#c4c4c4">GUI_Pointer</div>
<svg class="a" style="left:798.3px;top:227.70000000000002px;" width="38.7" height="45" viewBox="0 0 38.7 45"><path d="M3 0 H27.5 L38.7 11 V42 Q38.7 45 35.7 45 H3 Q0 45 0 42 V3 Q0 0 3 0Z" fill="#f0f0f0"/><text transform="translate(19,37.3) scale(0.98,1.18)" x="0" y="0" text-anchor="middle" font-family="DejaVu Sans, sans-serif" font-weight="bold" font-size="31" fill="#246b24">#</text></svg>
<div class="a t" style="left:777.5px;width:80px;text-align:center;top:277.70000000000005px;height:12px;line-height:12px;font-size:8.2px;color:#c4c4c4">GUI_Settin...</div>
<div class="a" style="left:710.7px;top:506.4px;width:147.8px;height:15.6px;background:#3c3c3c;"></div>
<div class="a" style="left:710.7px;top:506px;width:147.8px;height:0.8px;background:#262626;"></div>
<div class="a" style="left:803px;top:514.2px;width:42.5px;height:0.9px;background:#6a6a6a;"></div>
<div class="a" style="left:824.2px;top:511.1px;width:7px;height:7px;background:#c8c8c8;border-radius:50%;"></div>
<div class="a" style="left:860px;top:22px;width:220px;height:500px;background:#383838;"></div>
<div class="a" style="left:860px;top:22px;width:220px;height:15.5px;background:#282828;"></div>
<div class="a" style="left:860px;top:22px;width:74px;height:15.5px;background:#3c3c3c;"></div>
<svg class="a" style="left:866.8px;top:26px;" width="8.4" height="8.4" viewBox="0 0 8.4 8.4"><circle cx="4.2" cy="4.2" r="4" fill="#d0d0d0"/><rect x="3.5" y="3.6" width="1.4" height="3" fill="#3c3c3c"/><rect x="3.5" y="1.7" width="1.4" height="1.3" fill="#3c3c3c"/></svg>
<div class="a t " style="left:879px;top:25.00px;height:14px;line-height:14px;color:#d0d0d0;font-size:10.3px">Inspector</div>
<svg class="a" style="left:1051.5px;top:24.8px;" width="8" height="9" viewBox="0 0 8 9"><path d="M1.6 4.3 V2.9 A2 2 0 0 1 5.6 2.9 V3.3" fill="none" stroke="#c4c4c4" stroke-width="1.05"/><rect x="0.8" y="4.6" width="5.8" height="3.4" rx="0.6" fill="none" stroke="#c4c4c4" stroke-width="1.05"/></svg>
<div class="a" style="left:1068.1px;top:25.900000000000002px;width:1.8px;height:1.8px;background:#b4b4b4;"></div>
<div class="a" style="left:1068.1px;top:29.1px;width:1.8px;height:1.8px;background:#b4b4b4;"></div>
<div class="a" style="left:1068.1px;top:32.300000000000004px;width:1.8px;height:1.8px;background:#b4b4b4;"></div>
<div class="a" style="left:860px;top:37.5px;width:220px;height:47px;background:#3c3c3c;"></div>
<svg class="a" style="left:865.7px;top:44.8px;" width="18" height="19" viewBox="0 0 18 19"><g fill="none" stroke="#c8c8c8" stroke-width="1.1" stroke-linejoin="round"><path d="M8.5 1 L15.8 4.6 V12.8 L8.5 16.6 L1.2 12.8 V4.6Z"/><path d="M1.2 4.6 L8.5 8.4 L15.8 4.6 M8.5 8.4 V16.6"/></g></svg>
<svg class="a" style="left:881.5px;top:60.85px;" width="5.2" height="3.3" viewBox="0 0 5.2 3.3"><path d="M0 0 H5.2 L2.6 3.3 Z" fill="#c4c4c4"/></svg>
<div class="a" style="left:896.3px;top:45.8px;width:11.2px;height:11.2px;background:#2a2a2a;border-radius:2px;border:0.7px solid #1f1f1f;"></div>
<svg class="a" style="left:897.8px;top:47.8px;" width="8.2" height="7.199999999999999" viewBox="0 0 8 7"><path d="M0.8 3.6 L3 5.8 L7.2 0.9" fill="none" stroke="#f0f0f0" stroke-width="1.4"/></svg>
<div class="a" style="left:912.6px;top:44.8px;width:101.4px;height:13.4px;background:#2a2a2a;border-radius:2px;border:0.7px solid #1f1f1f;"></div>
<div class="a t " style="left:914.5px;top:45.70px;height:14px;line-height:14px;color:#e4e4e4;font-weight:bold;font-size:10.3px">HPSlider</div>
<div class="a" style="left:1017px;top:45.8px;width:11px;height:11px;background:#2a2a2a;border-radius:2px;border:0.7px solid #1f1f1f;"></div>
<div class="a t " style="left:1031px;top:45.70px;height:14px;line-height:14px;color:#d0d0d0;font-size:10.3px">Static</div>
<svg class="a" style="left:1059px;top:50.0px;" width="5.5" height="3.6" viewBox="0 0 5.5 3.6"><path d="M0 0 H5.5 L2.75 3.6 Z" fill="#c4c4c4"/></svg>
<div class="a t " style="left:893.5px;top:64.40px;height:14px;line-height:14px;color:#c8c8c8;">Tag</div>
<div class="a" style="left:914.8px;top:63.8px;width:58.5px;height:12.6px;background:#515151;border-radius:2px;border:0.7px solid #303030;"></div>
<div class="a t " style="left:917.5999999999999px;top:64.20px;height:14px;line-height:14px;color:#e0e0e0;">Untagged</div>
<svg class="a" style="left:963.3px;top:68.5px;" width="5.5" height="3.6" viewBox="0 0 5.5 3.6"><path d="M0 0 H5.5 L2.75 3.6 Z" fill="#d8d8d8"/></svg>
<div class="a t " style="left:985px;top:64.40px;height:14px;line-height:14px;color:#c8c8c8;">Layer</div>
<div class="a" style="left:1014px;top:63.8px;width:51.5px;height:12.6px;background:#515151;border-radius:2px;border:0.7px solid #303030;"></div>
<div class="a t " style="left:1016.8px;top:64.20px;height:14px;line-height:14px;color:#e0e0e0;">UI</div>
<svg class="a" style="left:1055.5px;top:68.5px;" width="5.5" height="3.6" viewBox="0 0 5.5 3.6"><path d="M0 0 H5.5 L2.75 3.6 Z" fill="#d8d8d8"/></svg>
<div class="a" style="left:860px;top:84.3px;width:210.2px;height:0.9px;background:#1f1f1f;"></div>
<div class="a" style="left:860px;top:85.2px;width:210.2px;height:16.2px;background:#3e3e3e;"></div>
<div class="a" style="left:860px;top:101.4px;width:210.2px;height:0.8px;background:#303030;"></div>
<svg class="a" style="left:865px;top:91.0px;" width="6.6" height="5.6" viewBox="0 0 6.6 5.6"><path d="M0 0 H6.6 L3.3 5.6 Z" fill="#6e6e6e"/></svg>
<svg class="a" style="left:877px;top:88.3px;" width="10.5" height="10.5" viewBox="0 0 10.5 10.5"><g fill="#d0d0d0"><path d="M0.3 0.3 H3.6 L2.6 1.3 L4.4 3.1 L3.1 4.4 L1.3 2.6 L0.3 3.6Z"/><path d="M10.2 0.3 V3.6 L9.2 2.6 L7.4 4.4 L6.1 3.1 L7.9 1.3 L6.9 0.3Z"/><path d="M0.3 10.2 V6.9 L1.3 7.9 L3.1 6.1 L4.4 7.4 L2.6 9.2 L3.6 10.2Z"/><path d="M10.2 10.2 H6.9 L7.9 9.2 L6.1 7.4 L7.4 6.1 L9.2 7.9 L10.2 6.9Z"/></g></svg>
<div class="a t " style="left:907.5px;top:86.70px;height:14px;line-height:14px;color:#dcdcdc;font-weight:bold;">Rect Transform</div>
<svg class="a" style="left:1023.3px;top:88.8px;" width="9" height="9" viewBox="0 0 9 9"><circle cx="4.5" cy="4.5" r="4.2" fill="#d0d0d0"/><text x="4.5" y="7.2" text-anchor="middle" font-family="Liberation Sans, sans-serif" font-weight="bold" font-size="7.2" fill="#3e3e3e">?</text></svg>
<svg class="a" style="left:1039.5px;top:88.8px;" width="9" height="9" viewBox="0 0 9 9"><g stroke="#d0d0d0" stroke-width="1"><path d="M0.3 2.5 H8.7 M0.3 6.5 H8.7"/><path d="M5.8 0.6 V4.4 M3 4.6 V8.4" stroke-width="1.3"/></g></svg>
<div class="a" style="left:1058.6px;top:89.19999999999999px;width:1.8px;height:1.8px;background:#b4b4b4;"></div>
<div class="a" style="left:1058.6px;top:92.39999999999999px;width:1.8px;height:1.8px;background:#b4b4b4;"></div>
<div class="a" style="left:1058.6px;top:95.6px;width:1.8px;height:1.8px;background:#b4b4b4;"></div>
<div class="a t " style="left:882.5px;top:106.30px;height:14px;line-height:14px;color:#c8c8c8;font-size:8.6px">center</div>
<div class="a t" style="left:867px;top:149.8px;font-size:8px;color:#c8c8c8;transform:rotate(-90deg);transform-origin:0 0;line-height:11px;height:11px">middle</div>
<div class="a" style="left:881.3px;top:123.3px;width:28px;height:28px;border:0.7px solid #606060;"></div>
<svg class="a" style="left:881.3px;top:123.3px;" width="28" height="28" viewBox="0 0 28 28"><path d="M14 0.5 V27.5 M0.5 14 H27.5" stroke="#9c4a44" stroke-width="0.75"/><rect x="7.6" y="7.6" width="12.8" height="12.8" fill="none" stroke="#a9b2ba" stroke-width="0.85"/><rect x="12.8" y="12.8" width="2.4" height="2.4" rx="0.6" fill="#f0a428"/></svg>
<div class="a t " style="left:927.5px;top:107.20px;height:14px;line-height:14px;color:#c8c8c8;">Pos X</div>
<div class="a t " style="left:975px;top:107.20px;height:14px;line-height:14px;color:#c8c8c8;">Pos Y</div>
<div class="a t " style="left:1021.5px;top:107.20px;height:14px;line-height:14px;color:#c8c8c8;">Pos Z</div>
<div class="a" style="left:927.3px;top:121.2px;width:44.6px;height:12.8px;background:#2a2a2a;border-radius:2px;border:0.7px solid #1f1f1f;"></div>
<div class="a t " style="left:929.9px;top:121.70px;height:14px;line-height:14px;color:#d2d2d2;">0</div>
<div class="a" style="left:974.8px;top:121.2px;width:44.6px;height:12.8px;background:#2a2a2a;border-radius:2px;border:0.7px solid #1f1f1f;"></div>
<div class="a t " style="left:977.4px;top:121.70px;height:14px;line-height:14px;color:#d2d2d2;">440</div>
<div class="a" style="left:1021.3px;top:121.2px;width:44.6px;height:12.8px;background:#2a2a2a;border-radius:2px;border:0.7px solid #1f1f1f;"></div>
<div class="a t " style="left:1023.9px;top:121.70px;height:14px;line-height:14px;color:#d2d2d2;">0</div>
<div class="a t " style="left:927.5px;top:136.40px;height:14px;line-height:14px;color:#c8c8c8;">Width</div>
<div class="a t " style="left:975px;top:136.40px;height:14px;line-height:14px;color:#c8c8c8;">Height</div>
<div class="a" style="left:927.3px;top:149.8px;width:44.6px;height:12.8px;background:#2a2a2a;border-radius:2px;border:0.7px solid #1f1f1f;"></div>
<div class="a t " style="left:929.9px;top:150.30px;height:14px;line-height:14px;color:#d2d2d2;">1000</div>
<div class="a" style="left:974.8px;top:149.8px;width:44.6px;height:12.8px;background:#2a2a2a;border-radius:2px;border:0.7px solid #1f1f1f;"></div>
<div class="a t " style="left:977.4px;top:150.30px;height:14px;line-height:14px;color:#d2d2d2;">100</div>
<div class="a" style="left:1026px;top:149.3px;width:18.7px;height:13.6px;background:#585858;border-radius:2px 0 0 2px;border:0.7px solid #303030;"></div>
<div class="a" style="left:1045.2px;top:149.3px;width:20.6px;height:13.6px;background:#585858;border-radius:0 2px 2px 0;border:0.7px solid #303030;"></div>
<div class="a" style="left:1031px;top:152.5px;width:8.5px;height:8px;border:0.9px dotted #b8b8b8;"></div>
<div class="a t " style="left:1052.5px;top:150.30px;height:14px;line-height:14px;color:#c0c0c0;font-size:8.6px">R</div>
<svg class="a" style="left:865.5px;top:169.8px;" width="6.6" height="5.6" viewBox="0 0 6.6 5.6"><path d="M0 0 H6.6 L3.3 5.6 Z" fill="#6e6e6e"/></svg>
<div class="a t " style="left:875px;top:165.70px;height:14px;line-height:14px;color:#c8c8c8;">Anchors</div>
<div class="a t " style="left:887.3px;top:180.80px;height:14px;line-height:14px;color:#c8c8c8;">Min</div>
<div class="a t " style="left:927.5px;top:180.80px;height:14px;line-height:14px;color:#c8c8c8;">X</div>
<div class="a" style="left:935.8px;top:180.39999999999998px;width:36px;height:12.6px;background:#2a2a2a;border-radius:2px;border:0.7px solid #1f1f1f;"></div>
<div class="a t " style="left:938.4px;top:180.80px;height:14px;line-height:14px;color:#d2d2d2;">0.5</div>
<div class="a t " style="left:975.3px;top:180.80px;height:14px;line-height:14px;color:#c8c8c8;">Y</div>
<div class="a" style="left:983.8px;top:180.39999999999998px;width:35.6px;height:12.6px;background:#2a2a2a;border-radius:2px;border:0.7px solid #1f1f1f;"></div>
<div class="a t " style="left:986.4px;top:180.80px;height:14px;line-height:14px;color:#d2d2d2;">0.5</div>
<div class="a t " style="left:887.3px;top:196.00px;height:14px;line-height:14px;color:#c8c8c8;">Max</div>
<div class="a t " style="left:927.5px;top:196.00px;height:14px;line-height:14px;color:#c8c8c8;">X</div>
<div class="a" style="left:935.8px;top:195.6px;width:36px;height:12.6px;background:#2a2a2a;border-radius:2px;border:0.7px solid #1f1f1f;"></div>
<div class="a t " style="left:938.4px;top:196.00px;height:14px;line-height:14px;color:#d2d2d2;">0.5</div>
<div class="a t " style="left:975.3px;top:196.00px;height:14px;line-height:14px;color:#c8c8c8;">Y</div>
<div class="a" style="left:983.8px;top:195.6px;width:35.6px;height:12.6px;background:#2a2a2a;border-radius:2px;border:0.7px solid #1f1f1f;"></div>
<div class="a t " style="left:986.4px;top:196.00px;height:14px;line-height:14px;color:#d2d2d2;">0.5</div>
<div class="a t " style="left:875px;top:213.60px;height:14px;line-height:14px;color:#c8c8c8;">Pivot</div>
<div class="a t " style="left:927.5px;top:213.60px;height:14px;line-height:14px;color:#c8c8c8;">X</div>
<div class="a" style="left:935.8px;top:213.2px;width:36px;height:12.6px;background:#2a2a2a;border-radius:2px;border:0.7px solid #1f1f1f;"></div>
<div class="a t " style="left:938.4px;top:213.60px;height:14px;line-height:14px;color:#d2d2d2;">0.5</div>
<div class="a t " style="left:975.3px;top:213.60px;height:14px;line-height:14px;color:#c8c8c8;">Y</div>
<div class="a" style="left:983.8px;top:213.2px;width:35.6px;height:12.6px;background:#2a2a2a;border-radius:2px;border:0.7px solid #1f1f1f;"></div>
<div class="a t " style="left:986.4px;top:213.60px;height:14px;line-height:14px;color:#d2d2d2;">0.5</div>
<div class="a t " style="left:875px;top:235.80px;height:14px;line-height:14px;color:#c8c8c8;">Rotation</div>
<div class="a t " style="left:929.5px;top:235.80px;height:14px;line-height:14px;color:#c8c8c8;">X</div>
<div class="a" style="left:938.3px;top:235.39999999999998px;width:33.6px;height:12.6px;background:#2a2a2a;border-radius:2px;border:0.7px solid #1f1f1f;"></div>
<div class="a t " style="left:940.9px;top:235.80px;height:14px;line-height:14px;color:#d2d2d2;">0</div>
<div class="a t " style="left:976.5px;top:235.80px;height:14px;line-height:14px;color:#c8c8c8;">Y</div>
<div class="a" style="left:985.3px;top:235.39999999999998px;width:33.6px;height:12.6px;background:#2a2a2a;border-radius:2px;border:0.7px solid #1f1f1f;"></div>
<div class="a t " style="left:987.9px;top:235.80px;height:14px;line-height:14px;color:#d2d2d2;">0</div>
<div class="a t " style="left:1024px;top:235.80px;height:14px;line-height:14px;color:#c8c8c8;">Z</div>
<div class="a" style="left:1032.8px;top:235.39999999999998px;width:33.2px;height:12.6px;background:#2a2a2a;border-radius:2px;border:0.7px solid #1f1f1f;"></div>
<div class="a t " style="left:1035.3999999999999px;top:235.80px;height:14px;line-height:14px;color:#d2d2d2;">0</div>
<div class="a t " style="left:875px;top:251.70px;height:14px;line-height:14px;color:#c8c8c8;">Scale</div>
<div class="a t " style="left:929.5px;top:251.70px;height:14px;line-height:14px;color:#c8c8c8;">X</div>
<div class="a" style="left:938.3px;top:251.3px;width:33.6px;height:12.6px;background:#2a2a2a;border-radius:2px;border:0.7px solid #1f1f1f;"></div>
<div class="a t " style="left:940.9px;top:251.70px;height:14px;line-height:14px;color:#d2d2d2;">1</div>
<div class="a t " style="left:976.5px;top:251.70px;height:14px;line-height:14px;color:#c8c8c8;">Y</div>
<div class="a" style="left:985.3px;top:251.3px;width:33.6px;height:12.6px;background:#2a2a2a;border-radius:2px;border:0.7px solid #1f1f1f;"></div>
<div class="a t " style="left:987.9px;top:251.70px;height:14px;line-height:14px;color:#d2d2d2;">1</div>
<div class="a t " style="left:1024px;top:251.70px;height:14px;line-height:14px;color:#c8c8c8;">Z</div>
<div class="a" style="left:1032.8px;top:251.3px;width:33.2px;height:12.6px;background:#2a2a2a;border-radius:2px;border:0.7px solid #1f1f1f;"></div>
<div class="a t " style="left:1035.3999999999999px;top:251.70px;height:14px;line-height:14px;color:#d2d2d2;">1</div>
<div class="a" style="left:860px;top:271.5px;width:210.2px;height:0.9px;background:#1f1f1f;"></div>
<div class="a" style="left:860px;top:272.4px;width:210.2px;height:16.2px;background:#3e3e3e;"></div>
<div class="a" style="left:860px;top:288.6px;width:210.2px;height:0.8px;background:#303030;"></div>
<svg class="a" style="left:865px;top:278.1px;" width="6.6" height="5.6" viewBox="0 0 6.6 5.6"><path d="M0 0 H6.6 L3.3 5.6 Z" fill="#6e6e6e"/></svg>
<svg class="a" style="left:876px;top:276.8px;" width="12" height="7.5" viewBox="0 0 12 7.5"><rect x="0.5" y="0.5" width="10.8" height="6" rx="3" fill="#d0d0d0"/><rect x="2" y="2.6" width="3.3" height="1.8" fill="#3e3e3e"/><circle cx="8" cy="3.5" r="1.9" fill="#3e3e3e"/><circle cx="8" cy="3.5" r="1.1" fill="#d0d0d0"/></svg>
<div class="a" style="left:892px;top:274.8px;width:11.2px;height:11.2px;background:#2a2a2a;border-radius:2px;border:0.7px solid #1f1f1f;"></div>
<svg class="a" style="left:893.5px;top:276.8px;" width="8.2" height="7.199999999999999" viewBox="0 0 8 7"><path d="M0.8 3.6 L3 5.8 L7.2 0.9" fill="none" stroke="#f0f0f0" stroke-width="1.4"/></svg>
<div class="a t " style="left:907.5px;top:273.90px;height:14px;line-height:14px;color:#dcdcdc;font-weight:bold;">Slider</div>
<svg class="a" style="left:1023.3px;top:275.8px;" width="9" height="9" viewBox="0 0 9 9"><circle cx="4.5" cy="4.5" r="4.2" fill="#d0d0d0"/><text x="4.5" y="7.2" text-anchor="middle" font-family="Liberation Sans, sans-serif" font-weight="bold" font-size="7.2" fill="#3e3e3e">?</text></svg>
<svg class="a" style="left:1039.5px;top:275.8px;" width="9" height="9" viewBox="0 0 9 9"><g stroke="#d0d0d0" stroke-width="1"><path d="M0.3 2.5 H8.7 M0.3 6.5 H8.7"/><path d="M5.8 0.6 V4.4 M3 4.6 V8.4" stroke-width="1.3"/></g></svg>
<div class="a" style="left:1058.6px;top:276.20000000000005px;width:1.8px;height:1.8px;background:#b4b4b4;"></div>
<div class="a" style="left:1058.6px;top:279.40000000000003px;width:1.8px;height:1.8px;background:#b4b4b4;"></div>
<div class="a" style="left:1058.6px;top:282.6px;width:1.8px;height:1.8px;background:#b4b4b4;"></div>
<div class="a t " style="left:875px;top:293.00px;height:14px;line-height:14px;color:#c8c8c8;">Interactable</div>
<div class="a" style="left:970.5px;top:293.5px;width:11.2px;height:11.2px;background:#2a2a2a;border-radius:2px;border:0.7px solid #1f1f1f;"></div>
<svg class="a" style="left:972.0px;top:295.5px;" width="8.2" height="7.199999999999999" viewBox="0 0 8 7"><path d="M0.8 3.6 L3 5.8 L7.2 0.9" fill="none" stroke="#f0f0f0" stroke-width="1.4"/></svg>
<div class="a t " style="left:875px;top:309.40px;height:14px;line-height:14px;color:#c8c8c8;">Transition</div>
<div class="a" style="left:972px;top:308.6px;width:94px;height:12.6px;background:#515151;border-radius:2px;border:0.7px solid #303030;"></div>
<div class="a t " style="left:974.8px;top:309.00px;height:14px;line-height:14px;color:#e0e0e0;">Color Tint</div>
<svg class="a" style="left:1056px;top:313.3px;" width="5.5" height="3.6" viewBox="0 0 5.5 3.6"><path d="M0 0 H5.5 L2.75 3.6 Z" fill="#d8d8d8"/></svg>
<div class="a t " style="left:887.3px;top:325.30px;height:14px;line-height:14px;color:#c8c8c8;">Target Graphic</div>
<div class="a" style="left:971.3px;top:324.5px;width:94.6px;height:12.8px;background:#2a2a2a;border-radius:2px;border:0.7px solid #1f1f1f;"></div>
<div class="a t " style="left:973.9px;top:325.00px;height:14px;line-height:14px;color:#d2d2d2;">None (Graphic)</div>
<div class="a" style="left:1051px;top:325.2px;width:14.3px;height:11.4px;background:#2f2f2f;border-radius:0 2px 2px 0;"></div>
<svg class="a" style="left:1054.3px;top:327px;" width="8" height="8" viewBox="0 0 8 8"><circle cx="4" cy="4" r="3.3" fill="none" stroke="#c8c8c8" stroke-width="0.9"/><circle cx="4" cy="4" r="1.1" fill="#c8c8c8"/></svg>
<div class="a" style="left:887.3px;top:339.8px;width:178.8px;height:28.4px;background:#414141;border-radius:2px;border:0.7px solid #2c2c2c;"></div>
<svg class="a" style="left:889.5px;top:342px;" width="23" height="22" viewBox="0 0 23 22"><path d="M11.5 1.2 L22 20.5 H1Z" fill="#f5c12c" stroke="#f5c12c" stroke-width="1.2" stroke-linejoin="round"/><rect x="10.3" y="6.8" width="2.5" height="7.6" rx="0.6" fill="#3a3a3a"/><circle cx="11.55" cy="17" r="1.45" fill="#3a3a3a"/></svg>
<div class="a t " style="left:915.5px;top:345.00px;height:10px;line-height:10px;color:#c0c0c0;font-size:8.65px">You must have a Graphic target in</div>
<div class="a t " style="left:915.5px;top:354.50px;height:10px;line-height:10px;color:#c0c0c0;font-size:8.65px">order to use a color transition.</div>
<div class="a t " style="left:887.3px;top:372.70px;height:14px;line-height:14px;color:#c8c8c8;">Normal Color</div>
<div class="a" style="left:971.5px;top:372.20000000000005px;width:80px;height:12.6px;background:#ffffff;border-radius:1px;"></div>
<div class="a" style="left:971.5px;top:383.0px;width:80px;height:1.8px;background:#ffffff;"></div>
<div class="a" style="left:1052px;top:372.20000000000005px;width:14px;height:12.6px;background:#3a3a3a;"></div>
<svg class="a" style="left:1054.5px;top:373.6px;" width="9" height="10" viewBox="0 0 9 10"><path d="M6.6 0.6 Q7.8 0 8.4 0.9 Q9 1.8 8 2.6 L7 3.4 L5.6 2 Z" fill="#c8c8c8"/><path d="M4.6 2.4 L7 4.8 M5.4 3.4 L1.2 7.6 L0.8 9 L2.2 8.6 L6.4 4.4" fill="none" stroke="#c8c8c8" stroke-width="1"/></svg>
<div class="a t " style="left:887.3px;top:388.45px;height:14px;line-height:14px;color:#c8c8c8;">Highlighted Color</div>
<div class="a" style="left:971.5px;top:387.95000000000005px;width:80px;height:12.6px;background:#f5f5f5;border-radius:1px;"></div>
<div class="a" style="left:971.5px;top:398.75px;width:80px;height:1.8px;background:#ffffff;"></div>
<div class="a" style="left:1052px;top:387.95000000000005px;width:14px;height:12.6px;background:#3a3a3a;"></div>
<svg class="a" style="left:1054.5px;top:389.35px;" width="9" height="10" viewBox="0 0 9 10"><path d="M6.6 0.6 Q7.8 0 8.4 0.9 Q9 1.8 8 2.6 L7 3.4 L5.6 2 Z" fill="#c8c8c8"/><path d="M4.6 2.4 L7 4.8 M5.4 3.4 L1.2 7.6 L0.8 9 L2.2 8.6 L6.4 4.4" fill="none" stroke="#c8c8c8" stroke-width="1"/></svg>
<div class="a t " style="left:887.3px;top:404.20px;height:14px;line-height:14px;color:#c8c8c8;">Pressed Color</div>
<div class="a" style="left:971.5px;top:403.70000000000005px;width:80px;height:12.6px;background:#c8c8c8;border-radius:1px;"></div>
<div class="a" style="left:971.5px;top:414.5px;width:80px;height:1.8px;background:#ffffff;"></div>
<div class="a" style="left:1052px;top:403.70000000000005px;width:14px;height:12.6px;background:#3a3a3a;"></div>
<svg class="a" style="left:1054.5px;top:405.1px;" width="9" height="10" viewBox="0 0 9 10"><path d="M6.6 0.6 Q7.8 0 8.4 0.9 Q9 1.8 8 2.6 L7 3.4 L5.6 2 Z" fill="#c8c8c8"/><path d="M4.6 2.4 L7 4.8 M5.4 3.4 L1.2 7.6 L0.8 9 L2.2 8.6 L6.4 4.4" fill="none" stroke="#c8c8c8" stroke-width="1"/></svg>
<div class="a t " style="left:887.3px;top:419.95px;height:14px;line-height:14px;color:#c8c8c8;">Selected Color</div>
<div class="a" style="left:971.5px;top:419.45000000000005px;width:80px;height:12.6px;background:#f5f5f5;border-radius:1px;"></div>
<div class="a" style="left:971.5px;top:430.25px;width:80px;height:1.8px;background:#ffffff;"></div>
<div class="a" style="left:1052px;top:419.45000000000005px;width:14px;height:12.6px;background:#3a3a3a;"></div>
<svg class="a" style="left:1054.5px;top:420.85px;" width="9" height="10" viewBox="0 0 9 10"><path d="M6.6 0.6 Q7.8 0 8.4 0.9 Q9 1.8 8 2.6 L7 3.4 L5.6 2 Z" fill="#c8c8c8"/><path d="M4.6 2.4 L7 4.8 M5.4 3.4 L1.2 7.6 L0.8 9 L2.2 8.6 L6.4 4.4" fill="none" stroke="#c8c8c8" stroke-width="1"/></svg>
<div class="a t " style="left:887.3px;top:435.70px;height:14px;line-height:14px;color:#c8c8c8;">Disabled Color</div>
<div class="a" style="left:971.5px;top:435.20000000000005px;width:80px;height:12.6px;background:#c8c8c8;border-radius:1px;"></div>
<div class="a" style="left:971.5px;top:446.0px;width:80px;height:1.8px;background:#000000;"></div>
<div class="a" style="left:971.5px;top:446.0px;width:40px;height:1.8px;background:#ffffff;"></div>
<div class="a" style="left:1052px;top:435.20000000000005px;width:14px;height:12.6px;background:#3a3a3a;"></div>
<svg class="a" style="left:1054.5px;top:436.6px;" width="9" height="10" viewBox="0 0 9 10"><path d="M6.6 0.6 Q7.8 0 8.4 0.9 Q9 1.8 8 2.6 L7 3.4 L5.6 2 Z" fill="#c8c8c8"/><path d="M4.6 2.4 L7 4.8 M5.4 3.4 L1.2 7.6 L0.8 9 L2.2 8.6 L6.4 4.4" fill="none" stroke="#c8c8c8" stroke-width="1"/></svg>
<div class="a t " style="left:887.3px;top:451.50px;height:14px;line-height:14px;color:#c8c8c8;">Color Multiplier</div>
<div class="a" style="left:975px;top:457px;width:47px;height:0.9px;background:#5e5e5e;"></div>
<div class="a" style="left:971.5px;top:453.5px;width:7.4px;height:7.4px;background:#999;border-radius:50%;"></div>
<div class="a" style="left:1027.5px;top:451px;width:38.4px;height:12.8px;background:#2a2a2a;border-radius:2px;border:0.7px solid #1f1f1f;"></div>
<div class="a t " style="left:1030.1px;top:451.50px;height:14px;line-height:14px;color:#d2d2d2;">1</div>
<div class="a t " style="left:887.3px;top:467.30px;height:14px;line-height:14px;color:#c8c8c8;">Fade Duration</div>
<div class="a" style="left:971.3px;top:466.8px;width:94.6px;height:12.8px;background:#2a2a2a;border-radius:2px;border:0.7px solid #1f1f1f;"></div>
<div class="a t " style="left:973.9px;top:467.30px;height:14px;line-height:14px;color:#d2d2d2;">0.1</div>
<div class="a t " style="left:875px;top:488.90px;height:14px;line-height:14px;color:#c8c8c8;">Navigation</div>
<div class="a" style="left:972px;top:488.2px;width:94px;height:12.6px;background:#515151;border-radius:2px;border:0.7px solid #303030;"></div>
<div class="a t " style="left:974.8px;top:488.60px;height:14px;line-height:14px;color:#e0e0e0;">Automatic</div>
<svg class="a" style="left:1056px;top:492.9px;" width="5.5" height="3.6" viewBox="0 0 5.5 3.6"><path d="M0 0 H5.5 L2.75 3.6 Z" fill="#d8d8d8"/></svg>
<div class="a" style="left:860px;top:505.3px;width:220px;height:0.9px;background:#1f1f1f;"></div>
<div class="a" style="left:860px;top:506.2px;width:220px;height:15.8px;background:#3c3c3c;"></div>
<div class="a t " style="left:865.8px;top:508.40px;height:14px;line-height:14px;color:#d8d8d8;font-weight:bold;font-size:9.85px">Intercepted Events</div>
<div class="a" style="left:958px;top:512.5px;width:106px;height:0.8px;background:#2c2c2c;"></div>
<div class="a" style="left:958px;top:515.5px;width:106px;height:0.8px;background:#2c2c2c;"></div>
<div class="a" style="left:1072.1px;top:510.2px;width:1.8px;height:1.8px;background:#b4b4b4;"></div>
<div class="a" style="left:1072.1px;top:513.4px;width:1.8px;height:1.8px;background:#b4b4b4;"></div>
<div class="a" style="left:1072.1px;top:516.6px;width:1.8px;height:1.8px;background:#b4b4b4;"></div>
<div class="a" style="left:1070.4px;top:37.5px;width:9.6px;height:468px;background:#343434;"></div>
<div class="a" style="left:1070px;top:37.5px;width:0.7px;height:468px;background:#2c2c2c;"></div>
<svg class="a" style="left:1072.4px;top:41.8px;" width="5.8" height="3.6" viewBox="0 0 5.8 3.6"><path d="M0 3.6 H5.6 L2.8 0Z" fill="#c4c4c4"/></svg>
<div class="a" style="left:1071.8px;top:51.3px;width:6.8px;height:279px;background:#5c5c5c;border-radius:3.4px;"></div>
<svg class="a" style="left:1072.3px;top:497.1px;" width="6" height="3.8" viewBox="0 0 6 3.8"><path d="M0 0 H6 L3.0 3.8 Z" fill="#c4c4c4"/></svg>
<div class="a t " style="left:872.3px;top:474.60px;height:20px;line-height:20px;color:rgba(255,255,255,0.36);font-family:'Noto Sans CJK SC',sans-serif;font-weight:400;font-size:15.6px;">激活</div>
<div class="a t " style="left:910.2px;top:476.40px;height:20px;line-height:20px;color:rgba(255,255,255,0.36);font-family:'Liberation Sans',sans-serif;font-size:16.5px;">Windows</div>
<div class="a t " style="left:872.5px;top:497.50px;height:14px;line-height:14px;color:rgba(255,255,255,0.36);font-family:'Noto Sans CJK SC',sans-serif;font-weight:400;font-size:11.2px;">转到</div>
<div class="a t " style="left:896px;top:497.60px;height:14px;line-height:14px;color:rgba(255,255,255,0.36);font-family:'Liberation Sans',sans-serif;font-size:11.2px;">“</div>
<div class="a t " style="left:900.8px;top:497.50px;height:14px;line-height:14px;color:rgba(255,255,255,0.36);font-family:'Noto Sans CJK SC',sans-serif;font-weight:400;font-size:11.2px;">设置</div>
<div class="a t " style="left:925px;top:497.60px;height:14px;line-height:14px;color:rgba(255,255,255,0.36);font-family:'Liberation Sans',sans-serif;font-size:11.2px;">”</div>
<div class="a t " style="left:929.8px;top:497.50px;height:14px;line-height:14px;color:rgba(255,255,255,0.36);font-family:'Noto Sans CJK SC',sans-serif;font-weight:400;font-size:11.2px;">以激活</div>
<div class="a t " style="left:968.6px;top:498.00px;height:14px;line-height:14px;color:rgba(255,255,255,0.36);font-family:'Liberation Sans',sans-serif;font-size:12.2px;">Windows</div>
<div class="a t " style="left:1019.5px;top:497.50px;height:14px;line-height:14px;color:rgba(255,255,255,0.36);font-family:'Noto Sans CJK SC',sans-serif;font-weight:400;font-size:11.2px;">。</div>
<div class="a" style="left:0px;top:522px;width:1080px;height:18px;background:#191919;"></div>
<div class="a" style="left:1017.5px;top:524px;width:0.8px;height:14px;background:#222222;"></div>
<div class="a" style="left:1038px;top:524px;width:0.8px;height:14px;background:#222222;"></div>
<div class="a" style="left:1058.5px;top:524px;width:0.8px;height:14px;background:#222222;"></div>
<svg class="a" style="left:1000.5px;top:525.3px;" width="11" height="12" viewBox="0 0 11 12"><path d="M5.5 1.2 Q8.8 1.2 8.8 5.5 V8 Q8.8 11.4 5.5 11.4 Q2.2 11.4 2.2 8 V5.5 Q2.2 1.2 5.5 1.2Z" fill="#f5cb14"/><path d="M0.5 3 L2.8 4.6 M10.5 3 L8.2 4.6 M0.3 7 H2.5 M10.7 7 H8.5 M0.8 11 L2.8 9.4 M10.2 11 L8.2 9.4" stroke="#f5cb14" stroke-width="1.2"/><rect x="7.2" y="5" width="1.7" height="4.2" fill="#191919"/><rect x="7.2" y="10" width="1.7" height="1.6" fill="#191919"/></svg>
<svg class="a" style="left:1022px;top:526px;" width="13" height="12" viewBox="0 0 13 12"><ellipse cx="5.5" cy="2.6" rx="4.5" ry="1.9" fill="#c4c4c4"/><path d="M1 4.4 Q5.5 7 10 4.4 V6.6 Q5.5 9.2 1 6.6Z M1 8 Q5.5 10.6 10 8 V9.6 Q5.5 12.2 1 9.6Z" fill="#c4c4c4"/><path d="M0.8 0.8 L11.6 11.2" stroke="#191919" stroke-width="2"/><path d="M1.6 0.6 L12 10.8" stroke="#c4c4c4" stroke-width="1"/></svg>
<svg class="a" style="left:1042.8px;top:526px;" width="13" height="12" viewBox="0 0 13 12"><g fill="none" stroke="#c4c4c4" stroke-width="1.1"><circle cx="6" cy="6" r="4.6"/><path d="M6 1.4 V10.6 M1.6 4.4 H10.4 M1.6 7.8 H10.4"/></g><path d="M0.8 0.8 L11.6 11.2" stroke="#191919" stroke-width="2"/><path d="M1.6 0.6 L12 10.8" stroke="#c4c4c4" stroke-width="1"/></svg>
<svg class="a" style="left:1063px;top:526px;" width="12" height="12" viewBox="0 0 12 12"><circle cx="6" cy="6" r="5" fill="none" stroke="#c4c4c4" stroke-width="1.1"/><path d="M3.4 6.2 L5.4 8.2 L8.8 4.2" fill="none" stroke="#c4c4c4" stroke-width="1.2"/></svg>
</body></html>
